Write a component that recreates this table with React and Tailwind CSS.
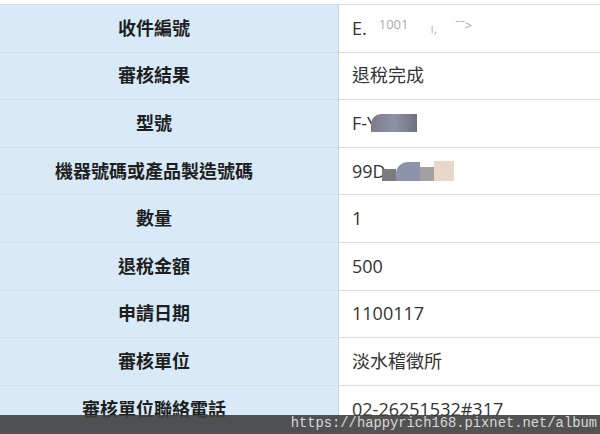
const rows = [
  { label: '收件編號', value: 'id' },
  { label: '審核結果', value: '退稅完成' },
  { label: '型號', value: 'model' },
  { label: '機器號碼或產品製造號碼', value: 'serial' },
  { label: '數量', value: '1' },
  { label: '退稅金額', value: '500' },
  { label: '申請日期', value: '1100117' },
  { label: '審核單位', value: '淡水稽徵所' },
  { label: '審核單位聯絡電話', value: '02-26251532#317' },
]

function Value({ value }) {
  if (value === 'id') {
    return (
      <span className="flex items-center">
        E.
        <span className="ml-[12px] text-[13px] text-[#aaa] -translate-y-[4px]">1001</span>
        <span className="ml-[22px] text-[13px] text-[#bbb]">ı,</span>
        <span className="ml-[18px] text-[13px] text-[#aaa] -translate-y-[3px]">ˉˉ&gt;</span>
      </span>
    )
  }
  if (value === 'model') {
    return (
      <span className="flex items-center">
        F-Y
        <span className="ml-[-6px] w-[46px] h-[18px] rounded-tl-[10px] bg-gradient-to-r from-[#7e7d86] via-[#8d92a6] to-[#6f7180]" />
      </span>
    )
  }
  if (value === 'serial') {
    return (
      <span className="flex items-center">
        99D
        <span className="ml-[-4px] flex items-end h-[20px]">
          <span className="w-[14px] h-[12px] bg-[#7b7c7f]" />
          <span className="w-[24px] h-[19px] rounded-tl-[12px] bg-[#8b93ad]" />
          <span className="w-[14px] h-[14px] bg-[#a3a0a0]" />
          <span className="w-[20px] h-[20px] bg-[#e9d8c8]" />
        </span>
      </span>
    )
  }
  return <span>{value}</span>
}

export default function App() {
  return (
    <div
      className="relative w-[600px] h-[434px] overflow-hidden bg-white pt-[4px]"
      style={{ fontFamily: '"Segoe UI", "Open Sans", "Noto Sans CJK TC", sans-serif' }}
    >
      {rows.map((r) => (
        <div key={r.label} className="flex h-[47.6px] border-t border-[#dcdcdc]">
          <div className="w-[339px] shrink-0 bg-[#d8eaf7] border-r border-[#c9d4dc] flex items-center justify-center pr-[30px] text-[18px] font-bold text-[#1e1e1e]">
            {r.label}
          </div>
          <div className="flex-1 flex items-center pl-[13px] text-[18px] text-[#333]">
            <Value value={r.value} />
          </div>
        </div>
      ))}
      <div className="absolute left-0 right-0 bottom-0 h-[19px] bg-[#3f3f3f]/90 flex items-center justify-end pr-[3px]">
        <span className="text-[13.8px] text-[#d8d8d8]" style={{ fontFamily: '"Liberation Mono", monospace' }}>
          https://happyrich168.pixnet.net/album
        </span>
      </div>
    </div>
  )
}
